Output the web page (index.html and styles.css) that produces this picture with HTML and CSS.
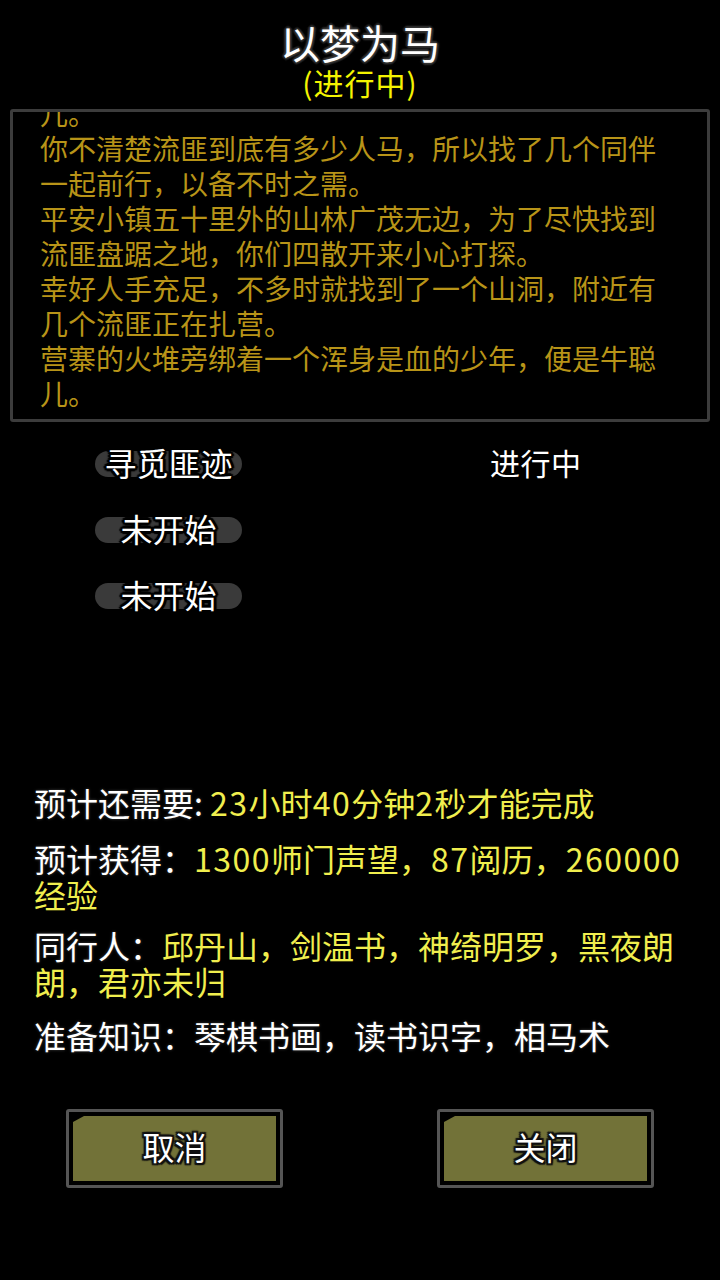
FILE: index.html
```html
<!DOCTYPE html>
<html lang="zh">
<head>
<meta charset="utf-8">
<title>以梦为马</title>
<link rel="stylesheet" href="styles.css">
</head>
<body>
<div class="screen">
  <header class="header">
    <div class="title">以梦为马</div>
    <div class="subtitle">(进行中)</div>
  </header>

  <section class="story">
    <div class="story-text">
      <p>平安小镇的牛大婶哭诉，流匪掳走了她的儿子牛聪儿。</p>
      <p>你不清楚流匪到底有多少人马，所以找了几个同伴一起前行，以备不时之需。</p>
      <p>平安小镇五十里外的山林广茂无边，为了尽快找到流匪盘踞之地，你们四散开来小心打探。</p>
      <p>幸好人手充足，不多时就找到了一个山洞，附近有几个流匪正在扎营。</p>
      <p>营寨的火堆旁绑着一个浑身是血的少年，便是牛聪儿。</p>
    </div>
  </section>

  <section class="steps">
    <div class="step">
      <div class="pill"><span class="pill-label">寻觅匪迹</span></div>
      <div class="step-status">进行中</div>
    </div>
    <div class="step">
      <div class="pill"><span class="pill-label">未开始</span></div>
    </div>
    <div class="step">
      <div class="pill"><span class="pill-label">未开始</span></div>
    </div>
  </section>

  <section class="info">
    <p class="info-line gap1"><span class="label">预计还需要:</span> <span class="value"><span class="num">23</span>小时<span class="num">40</span>分钟<span class="num">2</span>秒才能完成</span></p>
    <p class="info-line gap2"><span class="label">预计获得：</span><span class="value"><span class="num">1300</span>师门声望，<span class="num">87</span>阅历，<span class="num">260000</span>经验</span></p>
    <p class="info-line gap3"><span class="label">同行人：</span><span class="value">邱丹山，剑温书，神绮明罗，黑夜朗朗，君亦未归</span></p>
    <p class="info-line"><span class="label">准备知识：琴棋书画，读书识字，相马术</span></p>
  </section>

  <footer class="actions">
    <div class="btn"><div class="btn-face">取消</div></div>
    <div class="btn"><div class="btn-face">关闭</div></div>
  </footer>
</div>
</body>
</html>
```

FILE: styles.css
```css
html, body {
  margin: 0;
  padding: 0;
  background: #000;
}

body {
  font-family: "Noto Sans CJK SC", "Noto Sans", sans-serif;
  color: #fff;
}

.screen {
  width: 720px;
  height: 1280px;
  overflow: hidden;
}

p {
  margin: 0;
}

.header {
  padding-top: 18px;
  text-align: center;
}

.title {
  font-size: 40px;
  line-height: 48px;
  color: #fff;
  text-shadow: 0 0 3px #3a3a3a, 0 0 3px #3a3a3a, 2px 0 2px #333, -2px 0 2px #333, 0 2px 2px #333, 0 -2px 2px #333;
}

.subtitle {
  font-size: 30px;
  line-height: 32px;
  color: #f4f400;
  letter-spacing: 1px;
}

.story {
  margin: 11px 10px 0 10px;
  height: 313px;
  box-sizing: border-box;
  border: 3px solid #3c3c3c;
  border-radius: 3px;
  overflow: hidden;
}

.story-text {
  margin-top: -51px;
  padding-left: 27px;
  width: 630px;
  font-size: 28px;
  line-height: 35px;
  color: #b89418;
}

.steps {
  margin-top: 9px;
}

.step {
  height: 66px;
  display: flex;
  align-items: center;
  padding-left: 95px;
}

.pill {
  width: 147px;
  height: 26px;
  border-radius: 13px;
  background: #3a3a3a;
  display: flex;
  align-items: center;
  justify-content: center;
}

.pill-label {
  font-size: 32px;
  line-height: 26px;
  padding-bottom: 4px;
  color: #fff;
  white-space: nowrap;
  text-shadow: 2px 0 1px #000, -2px 0 1px #000, 0 2px 1px #000, 0 -2px 1px #000, 2px 2px 1px #000, -2px -2px 1px #000, 2px -2px 1px #000, -2px 2px 1px #000, 3px 0 1px #000, -3px 0 1px #000, 0 3px 1px #000, 0 -3px 1px #000;
}

.step-status {
  margin-left: 248px;
  font-size: 30px;
  line-height: 36px;
  padding-bottom: 4px;
  color: #fff;
  letter-spacing: 0.5px;
}

.info {
  margin-top: 155px;
  padding-left: 34px;
  width: 655px;
  font-size: 32px;
  line-height: 36px;
}

.info-line .label {
  color: #fff;
  text-shadow: 0 0 3px #444;
}

.info-line .value {
  color: #f0ee4e;
}

.num {
  letter-spacing: 1.5px;
}

.gap1 { margin-bottom: 20px; }
.gap2 { margin-bottom: 15px; }
.gap3 { margin-bottom: 18px; }

.actions {
  margin-top: 56px;
  padding-left: 66px;
  display: flex;
  gap: 154px;
}

.btn {
  width: 217px;
  height: 79px;
  box-sizing: border-box;
  border: 3px solid #555;
  border-radius: 3px;
  padding: 4px;
  background: #000;
}

.btn-face {
  height: 100%;
  box-sizing: border-box;
  padding-bottom: 5px;
  background: #727238;
  clip-path: polygon(11px 0, 100% 0, 100% 100%, 0 100%, 0 6px);
  display: flex;
  align-items: center;
  justify-content: center;
  font-size: 32px;
  color: #fff;
  text-shadow: 2px 0 1px #111, -2px 0 1px #111, 0 2px 1px #111, 0 -2px 1px #111, 2px 2px 1px #111, -2px -2px 1px #111, 2px -2px 1px #111, -2px 2px 1px #111;
}
```
